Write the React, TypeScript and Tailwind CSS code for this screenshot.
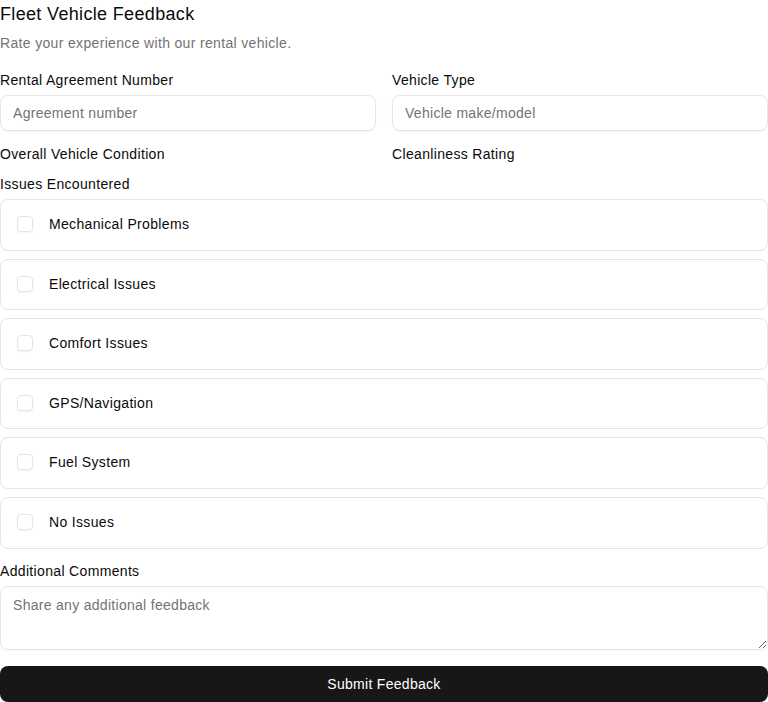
const issues = [
  "Mechanical Problems",
  "Electrical Issues",
  "Comfort Issues",
  "GPS/Navigation",
  "Fuel System",
  "No Issues",
];

export default function App() {
  return (
    <div className="w-[768px] h-[702px] overflow-hidden bg-white text-[#0a0a0a] tracking-[0.021em] font-['Liberation_Sans',Arial,sans-serif]">
      <h1 className="text-lg leading-7 font-normal">Fleet Vehicle Feedback</h1>
      <p className="mt-[5px] text-sm leading-5 text-[#737373]">
        Rate your experience with our rental vehicle.
      </p>

      <div className="mt-[17px] grid grid-cols-2 gap-x-4">
        <div>
          <label className="block text-sm leading-5">Rental Agreement Number</label>
          <input
            className="mt-[5px] block h-9 w-full rounded-lg border border-[#e5e5e5] px-3 text-sm tracking-[0.021em] placeholder:text-[#737373] shadow-[0_1px_2px_rgba(0,0,0,0.04)] outline-none"
            placeholder="Agreement number"
          />
        </div>
        <div>
          <label className="block text-sm leading-5">Vehicle Type</label>
          <input
            className="mt-[5px] block h-9 w-full rounded-lg border border-[#e5e5e5] px-3 text-sm tracking-[0.021em] placeholder:text-[#737373] shadow-[0_1px_2px_rgba(0,0,0,0.04)] outline-none"
            placeholder="Vehicle make/model"
          />
        </div>
        <label className="mt-[13px] block text-sm leading-5">Overall Vehicle Condition</label>
        <label className="mt-[13px] block text-sm leading-5">Cleanliness Rating</label>
      </div>

      <label className="mt-[10px] block text-sm leading-5">Issues Encountered</label>
      <div className="mt-[5px] flex flex-col gap-2">
        {issues.map((issue) => (
          <label
            key={issue}
            className="flex h-[51.6px] items-start gap-4 rounded-lg border border-[#e5e5e5] px-4 pt-4"
          >
            <span className="h-4 w-4 shrink-0 rounded border border-[#e5e5e5] bg-white shadow-[0_1px_2px_rgba(0,0,0,0.05)]" />
            <span className="text-sm leading-4">{issue}</span>
          </label>
        ))}
      </div>

      <label className="mt-[12.4px] block text-sm leading-5">Additional Comments</label>
      <textarea
        className="mt-[5px] block h-16 w-full rounded-lg border border-[#e5e5e5] px-3 py-2 text-sm leading-5 tracking-[0.021em] placeholder:text-[#737373] shadow-[0_1px_2px_rgba(0,0,0,0.04)] outline-none"
        placeholder="Share any additional feedback"
      />

      <button className="mt-4 block h-9 w-full rounded-lg bg-[#171717] text-sm tracking-[0.021em] text-white">
        Submit Feedback
      </button>
    </div>
  );
}
